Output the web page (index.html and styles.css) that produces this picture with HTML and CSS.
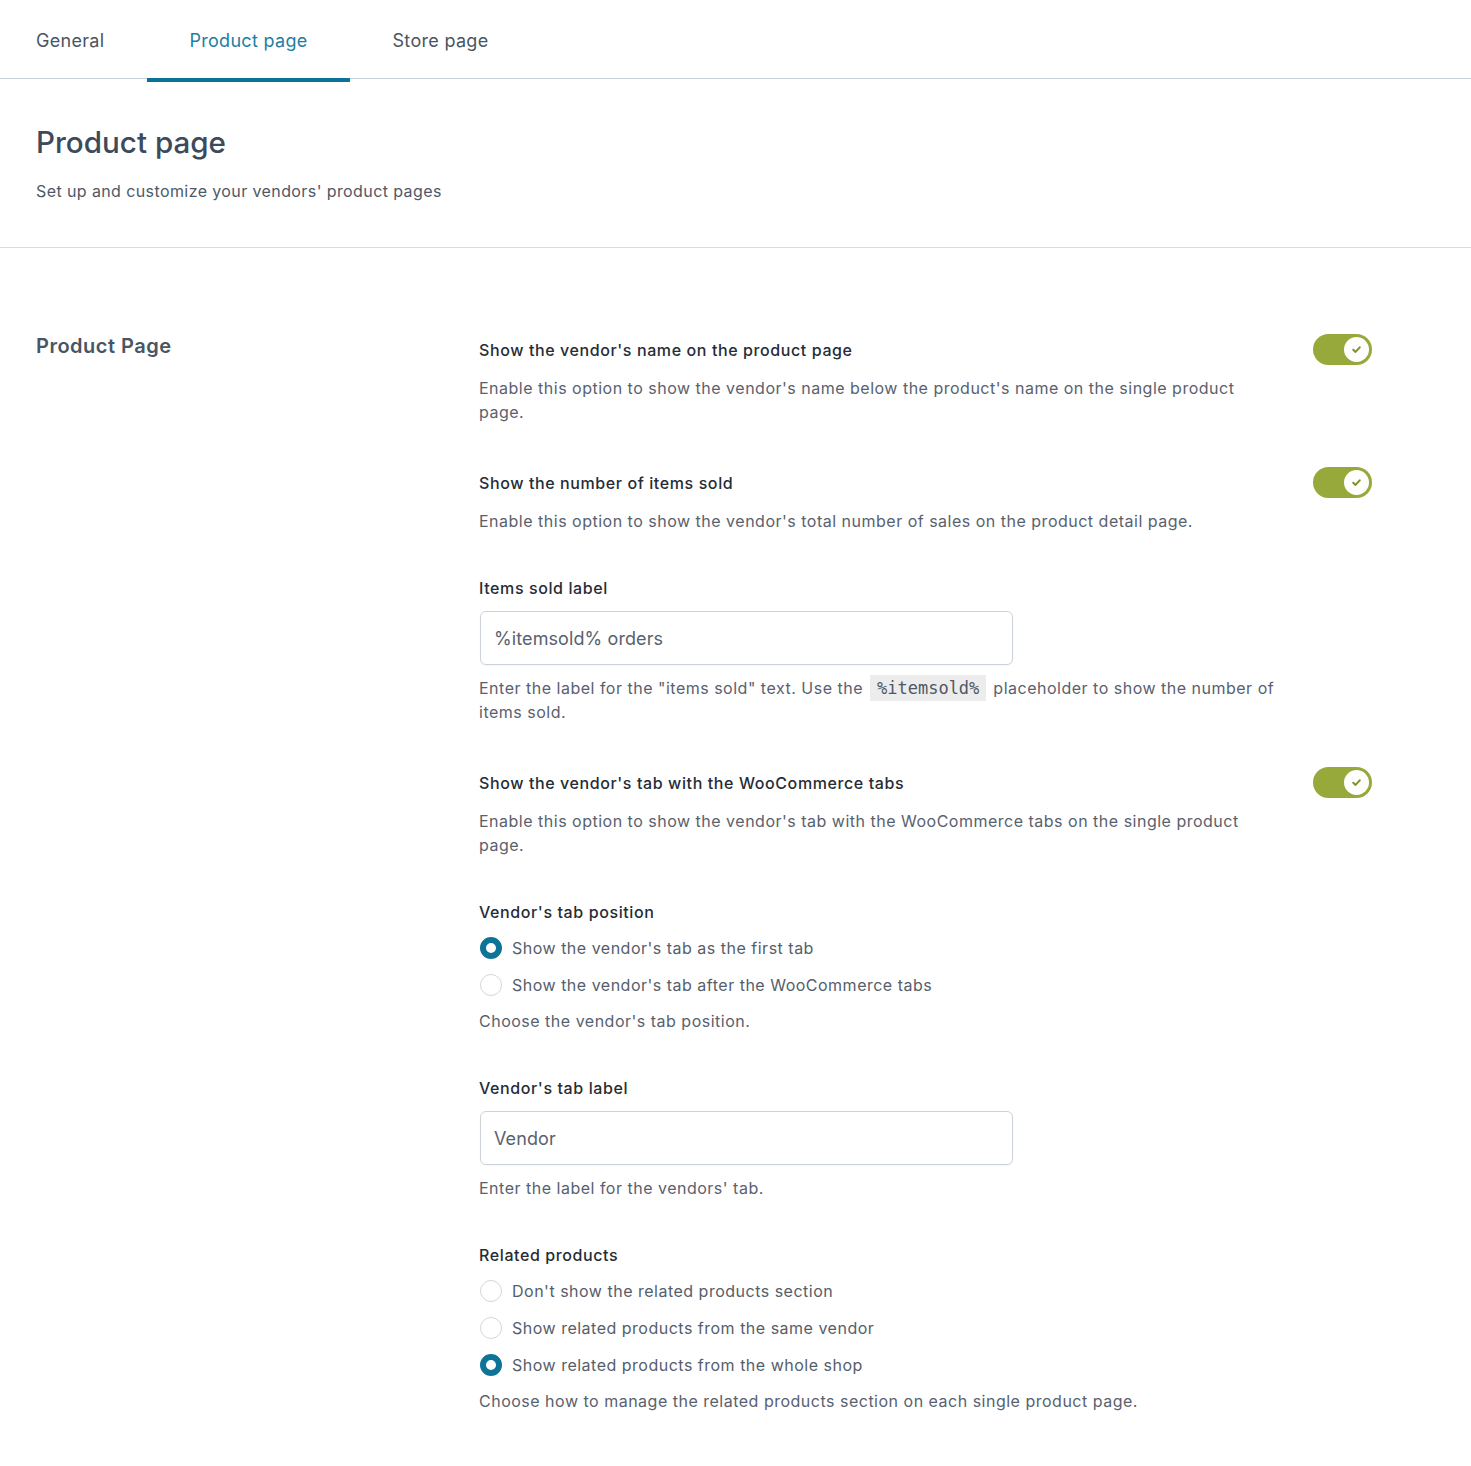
FILE: index.html
```html
<!DOCTYPE html>
<html>
<head>
<meta charset="utf-8">
<link rel="stylesheet" href="styles.css">
</head>
<body>
<nav class="tabs">
  <a class="tab tab-first">General</a>
  <a class="tab tab-active">Product page</a>
  <a class="tab">Store page</a>
</nav>
<header class="page-header">
  <h1 class="page-title">Product page</h1>
  <p class="page-subtitle">Set up and customize your vendors' product pages</p>
</header>
<section class="settings">
  <h2 class="settings-title">Product Page</h2>
  <div class="fields">
    <div class="field">
      <div class="field-head">
        <span class="label">Show the vendor's name on the product page</span>
        <span class="toggle"><span class="knob"><svg viewBox="0 0 12 12" width="13" height="13"><path d="M3 6.2 L5.1 8.2 L9 4" fill="none" stroke="#7f9128" stroke-width="1.9" stroke-linecap="round" stroke-linejoin="round"/></svg></span></span>
      </div>
      <p class="desc">Enable this option to show the vendor's name below the product's name on the single product page.</p>
    </div>
    <div class="field">
      <div class="field-head">
        <span class="label">Show the number of items sold</span>
        <span class="toggle"><span class="knob"><svg viewBox="0 0 12 12" width="13" height="13"><path d="M3 6.2 L5.1 8.2 L9 4" fill="none" stroke="#7f9128" stroke-width="1.9" stroke-linecap="round" stroke-linejoin="round"/></svg></span></span>
      </div>
      <p class="desc">Enable this option to show the vendor's total number of sales on the product detail page.</p>
    </div>
    <div class="field">
      <span class="label">Items sold label</span>
      <input class="text-input" type="text" value="%itemsold% orders">
      <p class="desc">Enter the label for the "items sold" text. Use the <code class="code">%itemsold%</code> placeholder to show the number of items sold.</p>
    </div>
    <div class="field">
      <div class="field-head">
        <span class="label">Show the vendor's tab with the WooCommerce tabs</span>
        <span class="toggle"><span class="knob"><svg viewBox="0 0 12 12" width="13" height="13"><path d="M3 6.2 L5.1 8.2 L9 4" fill="none" stroke="#7f9128" stroke-width="1.9" stroke-linecap="round" stroke-linejoin="round"/></svg></span></span>
      </div>
      <p class="desc">Enable this option to show the vendor's tab with the WooCommerce tabs on the single product page.</p>
    </div>
    <div class="field">
      <span class="label">Vendor's tab position</span>
      <label class="radio"><span class="dot dot-on"></span>Show the vendor's tab as the first tab</label>
      <label class="radio"><span class="dot"></span>Show the vendor's tab after the WooCommerce tabs</label>
      <p class="desc">Choose the vendor's tab position.</p>
    </div>
    <div class="field">
      <span class="label">Vendor's tab label</span>
      <input class="text-input" type="text" value="Vendor">
      <p class="desc">Enter the label for the vendors' tab.</p>
    </div>
    <div class="field">
      <span class="label">Related products</span>
      <label class="radio"><span class="dot"></span>Don't show the related products section</label>
      <label class="radio"><span class="dot"></span>Show related products from the same vendor</label>
      <label class="radio"><span class="dot dot-on"></span>Show related products from the whole shop</label>
      <p class="desc">Choose how to manage the related products section on each single product page.</p>
    </div>
  </div>
</section>
</body>
</html>
```
FILE: styles.css
```css
* { box-sizing: border-box; }
body {
  margin: 0;
  background: #fff;
  font-family: Inter, "Noto Sans", sans-serif;
  color: #434e5c;
}
.tabs {
  display: flex;
  height: 79px;
  border-bottom: 1px solid #c9d1d9;
  padding-left: 36px;
}
.tab {
  display: flex;
  align-items: center;
  padding: 2px 42.5px 0;
  font-size: 18px;
  color: #4a5563;
  position: relative;
  letter-spacing: 0.3px;
}
.tab-first { padding-left: 0; }
.tab-active { color: #1d7ea3; }
.tab-active::after {
  content: "";
  position: absolute;
  left: 0; right: 0; bottom: -4px;
  height: 4px;
  background: #0c7398;
}
.page-header {
  padding: 44px 36px 0;
  height: 169px;
  border-bottom: 1px solid #d9dde2;
}
.page-title {
  margin: 0;
  font-size: 29.6px;
  line-height: 38px;
  font-weight: 500;
  color: #3d4a5b;
}
.page-subtitle {
  margin: 18px 0 0;
  font-size: 16px;
  line-height: 24px;
  color: #4f5866;
  letter-spacing: 0.4px;
}
.settings {
  display: grid;
  grid-template-columns: 443px 1fr;
  padding: 86px 99px 50px 36px;
}
.settings-title {
  margin: -2px 0 0;
  font-size: 20px;
  line-height: 28px;
  font-weight: 600;
  color: #4a5563;
  letter-spacing: 0.5px;
}
.fields {
  display: flex;
  flex-direction: column;
  gap: 43px;
}
.field {
  display: flex;
  flex-direction: column;
  gap: 11px;
  align-items: flex-start;
}
.field-head {
  display: flex;
  align-items: center;
  justify-content: space-between;
  width: 100%;
  min-height: 31px;
}
.label {
  font-size: 16px;
  line-height: 24px;
  font-weight: 500;
  color: #262c35;
  letter-spacing: 0.6px;
}
.desc {
  margin: 0;
  max-width: 800px;
  font-size: 16px;
  line-height: 24px;
  color: #59616e;
  letter-spacing: 0.5px;
}
.toggle {
  width: 59px;
  height: 31px;
  border-radius: 16px;
  background: #97a93a;
  display: flex;
  align-items: center;
  justify-content: flex-end;
  padding-right: 3px;
  flex: none;
}
.knob {
  width: 25px;
  height: 25px;
  border-radius: 50%;
  background: #fff;
  display: flex;
  align-items: center;
  justify-content: center;
}
.text-input {
  width: 533px;
  height: 54px;
  margin-left: 1px;
  border: 1px solid #ccd2d9;
  border-radius: 6px;
  padding: 0 13px;
  font-family: Inter, "Noto Sans", sans-serif;
  font-size: 18px;
  color: #59616e;
  letter-spacing: 0.1px;
  box-shadow: 0 1px 2px rgba(0,0,0,0.04);
}
.code {
  font-family: "DejaVu Sans Mono", "Liberation Mono", monospace;
  font-size: 17px;
  letter-spacing: 0;
  background: #ececec;
  padding: 3px 7px;
  margin: 0 2px;
  color: #4f5866;
}
.radio {
  display: flex;
  align-items: center;
  height: 26px;
  font-size: 16px;
  color: #555e6b;
  letter-spacing: 0.5px;
  gap: 10px;
  margin-left: 1px;
}
.dot {
  width: 22px;
  height: 22px;
  border-radius: 50%;
  border: 1px solid #d3d8de;
  background: #fff;
  flex: none;
}
.dot-on {
  border: 6.5px solid #0e7497;
}
```
